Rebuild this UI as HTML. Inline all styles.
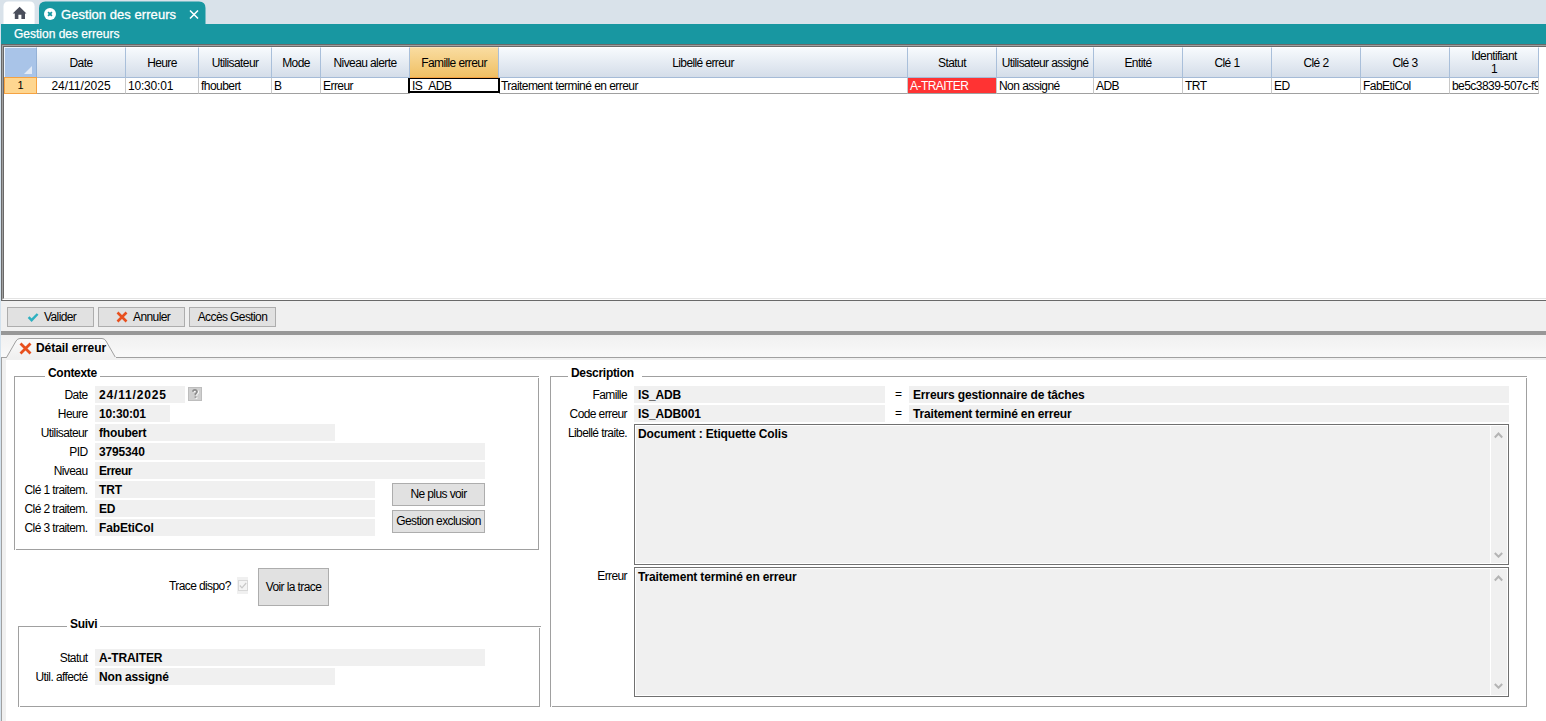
<!DOCTYPE html>
<html><head><meta charset="utf-8">
<style>
*{box-sizing:border-box;margin:0;padding:0}
html,body{width:1546px;height:721px;overflow:hidden}
body{position:relative;background:#fff;font-family:"Liberation Sans",sans-serif;font-size:11px;color:#000}
.a{position:absolute}
.t{position:absolute;white-space:nowrap;line-height:17px;height:16px;letter-spacing:-0.6px;font-size:12px}
.r{text-align:right}
.c{text-align:center}
.b{font-weight:bold}
/* tab strip */
#strip{left:0;top:0;width:1546px;height:24px;background:#d9e2ea}
#home{left:4px;top:2px;width:31px;height:22px;background:#fff;border-radius:5px 5px 0 0}
#ttab{left:39px;top:2px;width:167px;height:22px;background:#1897a1;border-radius:6px 6px 0 0}
#band{left:1px;top:24px;width:1545px;height:20px;background:#1897a1}
#lefte{left:0;top:24px;width:1px;height:697px;background:#d3e2ee}
/* grid */
#grid{left:1px;top:44px;width:1560px;height:257px;background:#fff;border-top:1px solid #696969;border-left:1px solid #696969;border-bottom:1px solid #696969}
#grid2{left:0;top:0;right:0;bottom:0;border-top:1px solid #a0a0a0;border-left:1px solid #a0a0a0;border-bottom:1px solid #fff}
#grid3{left:0;top:0;right:0;bottom:0;border-top:1px solid #696969;border-left:1px solid #696969;border-bottom:1px solid #e3e3e3}
.hc{position:absolute;top:47px;height:31px;background:linear-gradient(#f7fafd,#d4dde9);border-right:1px solid #a9bfda;border-bottom:1px solid #a5bbd7;border-top:1px solid #fff;text-align:center;line-height:30px;white-space:nowrap;overflow:hidden;letter-spacing:-0.6px;font-size:12px}
.dc{position:absolute;top:78px;height:16px;border-right:1px solid #c8c8c8;border-bottom:1px solid #a0a0a0;line-height:16px;padding-left:2px;white-space:nowrap;overflow:hidden;letter-spacing:-0.55px;font-size:12px}
/* buttons */
.btn{position:absolute;height:20px;background:#e1e1e1;border:1px solid #adadad;text-align:center;line-height:19px;white-space:nowrap;letter-spacing:-0.6px;font-size:12px}
.fld{position:absolute;height:17px;background:#f0f0f0;font-weight:bold;font-size:12px;letter-spacing:-0.15px;line-height:19px;padding-left:4px;white-space:nowrap;overflow:hidden}
.lbl{position:absolute;height:17px;line-height:18px;text-align:right;white-space:nowrap;letter-spacing:-0.6px;font-size:12px}
.grp{position:absolute;border:1px solid #a0a0a0}
.gl{position:absolute;background:#fff;font-weight:bold;font-size:12px;letter-spacing:-0.3px;padding:0 3px;line-height:14px;height:14px;white-space:nowrap}
</style></head><body>
<div id="lefte" class="a"></div>
<div id="strip" class="a"></div>
<svg class="a" style="left:0;top:0" width="40" height="24"><path d="M3.5 24 L3.5 6.5 Q3.5 1.5 8.5 1.5 L29.6 1.5 Q34.6 1.5 34.6 6.5 L34.6 24 Z" fill="#fff"/></svg>
<svg class="a" style="left:30px;top:0" width="190" height="24"><path d="M9 24 L9 8 Q9 1.5 15.5 1.5 L169 1.5 Q175.5 1.5 175.5 8 L175.5 24 Z" fill="#1897a1"/></svg>
<div id="band" class="a"></div>
<svg class="a" style="left:12px;top:6px" width="16" height="14" viewBox="0 0 16 14"><path d="M0.7 7.6 L7.6 0.8 L14.5 7.6 L13 7.6 L13 13 L9.4 13 L9.4 8.8 L6.4 8.8 L6.4 13 L2.8 13 L2.8 7.6 Z" fill="#4a4e5b"/></svg>
<svg class="a" style="left:43px;top:7px" width="14" height="14" viewBox="0 0 14 14"><circle cx="7" cy="7" r="6" fill="#fff"/><path d="M5.1 5.1 L8.9 8.9 M8.9 5.1 L5.1 8.9" stroke="#1897a1" stroke-width="1.8"/></svg>
<div class="t" style="left:61px;top:6px;font-size:13px;color:#fff;letter-spacing:0.05px;-webkit-text-stroke:0.3px #fff">Gestion des erreurs</div>
<svg class="a" style="left:189px;top:10px" width="10" height="9" viewBox="0 0 10 9"><path d="M1 0.5 L9 8.5 M9 0.5 L1 8.5" stroke="#fff" stroke-width="1.5"/></svg>
<div class="t" style="left:14px;top:26px;font-size:12px;color:#fff;letter-spacing:0px;-webkit-text-stroke:0.25px #fff">Gestion des erreurs</div>

<div id="grid" class="a"><div id="grid2" class="a"><div id="grid3" class="a"></div></div></div>
<div class="a" style="left:4px;top:47px;width:33px;height:30px;background:#a9c4e8;border-top:1px solid #eaf2fc;border-left:1px solid #eaf2fc;border-right:1px solid #94b1d6"></div>
<svg class="a" style="left:24px;top:66px" width="9" height="9"><polygon points="8,0 8,8 0,8" fill="#e3ebf7"/></svg>
<div class="a c" style="left:4px;top:77px;width:33px;height:17px;background:#fed690;border:1px solid #f5a242;line-height:15px">1</div>
<div class="hc" style="left:37px;width:89px">Date</div>
<div class="dc" style="left:37px;width:89px;text-align:center;padding:0;letter-spacing:0px">24/11/2025</div>
<div class="hc" style="left:126px;width:73px">Heure</div>
<div class="dc" style="left:126px;width:73px;letter-spacing:-0.2px">10:30:01</div>
<div class="hc" style="left:199px;width:73px">Utilisateur</div>
<div class="dc" style="left:199px;width:73px">fhoubert</div>
<div class="hc" style="left:272px;width:49px">Mode</div>
<div class="dc" style="left:272px;width:49px">B</div>
<div class="hc" style="left:321px;width:89px">Niveau alerte</div>
<div class="dc" style="left:321px;width:89px">Erreur</div>
<div class="hc" style="left:410px;width:89px;background:linear-gradient(#f9dca0,#f0c064);border-right-color:#a9bfda;border-bottom-color:#f5a242;border-top-color:#fbe6bb">Famille erreur</div>
<div class="dc" style="left:408px;width:92px;top:78px;height:15px;border:2px solid #000;border-top-width:1px;padding-left:2px;line-height:15px">IS_ADB</div>
<div class="hc" style="left:499px;width:409px">Libellé erreur</div>
<div class="dc" style="left:499px;width:409px">Traitement terminé en erreur</div>
<div class="hc" style="left:908px;width:89px">Statut</div>
<div class="dc" style="left:908px;width:89px;background:#ff3333;color:#fff;padding-left:2px">A-TRAITER</div>
<div class="hc" style="left:997px;width:97px">Utilisateur assigné</div>
<div class="dc" style="left:997px;width:97px">Non assigné</div>
<div class="hc" style="left:1094px;width:89px">Entité</div>
<div class="dc" style="left:1094px;width:89px">ADB</div>
<div class="hc" style="left:1183px;width:89px">Clé 1</div>
<div class="dc" style="left:1183px;width:89px">TRT</div>
<div class="hc" style="left:1272px;width:89px">Clé 2</div>
<div class="dc" style="left:1272px;width:89px">ED</div>
<div class="hc" style="left:1361px;width:89px">Clé 3</div>
<div class="dc" style="left:1361px;width:89px">FabEtiCol</div>
<div class="hc" style="left:1450px;width:89px;line-height:13px;padding-top:2px">Identifiant<br>1</div>
<div class="dc" style="left:1450px;width:89px">be5c3839-507c-f9</div>

<!-- below grid -->
<div class="a" style="left:1px;top:301px;width:1545px;height:30px;background:#f0f0f0"></div>
<div class="btn" style="left:7px;top:307px;width:87px;text-align:left;padding-left:36px">Valider</div>
<svg class="a" style="left:27px;top:312px" width="12" height="10" viewBox="0 0 12 10"><path d="M1.6 5.2 L4.6 8.2 L10.6 2" stroke="#2db0c0" stroke-width="2.4" fill="none"/></svg>
<div class="btn" style="left:98px;top:307px;width:87px;text-align:left;padding-left:34px">Annuler</div>
<svg class="a" style="left:116px;top:311px" width="12" height="12" viewBox="0 0 12 12"><path d="M1.5 1.5 L10.5 10.5 M10.5 1.5 L1.5 10.5" stroke="#e8501e" stroke-width="2.6"/></svg>
<div class="btn" style="left:189px;top:307px;width:87px">Accès Gestion</div>
<div class="a" style="left:1px;top:331px;width:1545px;height:4px;background:#979797"></div>
<div class="a" style="left:1px;top:335px;width:1545px;height:22px;background:linear-gradient(#f0f0f0,#f9f9f9)"></div>
<div class="a" style="left:1px;top:357px;width:1545px;height:364px;background:#f0f0f0;border-top:1px solid #a0a0a0;border-left:1px solid #a0a0a0"></div>
<div class="a" style="left:6px;top:360px;width:1540px;height:361px;background:#fff"></div>
<svg class="a" style="left:0;top:336px" width="130" height="24" viewBox="0 336 130 24"><defs><linearGradient id="tg" x1="0" y1="0" x2="0" y2="1"><stop offset="0" stop-color="#fbfbfb"/><stop offset="1" stop-color="#f0f0f0"/></linearGradient></defs><path d="M6.5 357.5 L16 341 Q17.5 338.5 20 338.5 L102 338.5 Q104.5 338.5 106 341 L115.5 357.5" fill="url(#tg)" stroke="#a0a0a0" stroke-width="1"/><rect x="7" y="357" width="109" height="3" fill="#f0f0f0"/></svg>
<svg class="a" style="left:19px;top:342px" width="13" height="13" viewBox="0 0 13 13"><path d="M1.5 1.5 L11.5 11.5 M11.5 1.5 L1.5 11.5" stroke="#e8501e" stroke-width="2.8"/></svg>
<div class="t b" style="left:36px;top:340px;font-size:12px;letter-spacing:-0.05px">Détail erreur</div>

<!-- Contexte -->
<div class="grp" style="left:14px;top:376px;width:525px;height:174px"></div>
<div class="gl" style="left:45px;top:366px">Contexte</div>
<div class="lbl" style="left:0;width:87.5px;top:386px">Date</div>
<div class="fld" style="left:95px;top:386px;width:90px;letter-spacing:0.85px">24/11/2025</div>
<div class="a" style="left:188px;top:387px;width:14px;height:14px;background:#cfcfcf;border:1px solid #bdbdbd"></div><svg class="a" style="left:191px;top:389px" width="10" height="11" viewBox="0 0 10 11"><path d="M3 3.2 Q3 1.4 5 1.4 Q7 1.4 7 3.2 Q7 4.4 5.5 5.2 L5.5 6.8 M5.5 8.3 L5.5 9.8" stroke="#fff" stroke-width="1.8" fill="none"/><path d="M2 2.7 Q2 0.9 4 0.9 Q6 0.9 6 2.7 Q6 3.9 4.5 4.7 L4.5 6.3 M4.5 7.6 L4.5 8.8" stroke="#8c8c8c" stroke-width="1.8" fill="none"/></svg>
<div class="lbl" style="left:0;width:87.5px;top:405px">Heure</div>
<div class="fld" style="left:95px;top:405px;width:75px">10:30:01</div>
<div class="lbl" style="left:0;width:87.5px;top:424px">Utilisateur</div>
<div class="fld" style="left:95px;top:424px;width:240px">fhoubert</div>
<div class="lbl" style="left:0;width:87.5px;top:443px">PID</div>
<div class="fld" style="left:95px;top:443px;width:390px">3795340</div>
<div class="lbl" style="left:0;width:87.5px;top:462px">Niveau</div>
<div class="fld" style="left:95px;top:462px;width:390px;letter-spacing:-0.5px">Erreur</div>
<div class="lbl" style="left:0;width:87.5px;top:481px">Clé 1 traitem.</div>
<div class="fld" style="left:95px;top:481px;width:280px">TRT</div>
<div class="lbl" style="left:0;width:87.5px;top:500px">Clé 2 traitem.</div>
<div class="fld" style="left:95px;top:500px;width:280px">ED</div>
<div class="lbl" style="left:0;width:87.5px;top:519px">Clé 3 traitem.</div>
<div class="fld" style="left:95px;top:519px;width:280px">FabEtiCol</div>
<div class="btn" style="left:392px;top:483px;width:93px;height:23px;line-height:21px">Ne plus voir</div>
<div class="btn" style="left:392px;top:510px;width:93px;height:23px;line-height:21px">Gestion exclusion</div>

<div class="t" style="left:169px;top:578px">Trace dispo?</div>
<div class="a" style="left:237px;top:577px;width:11px;height:17px;background:#f0f0f0"></div>
<div class="a" style="left:238px;top:580px;width:10px;height:11px;border:1px solid #d8d8d8;background:#f4f4f4"></div>
<svg class="a" style="left:239px;top:582px" width="8" height="7" viewBox="0 0 8 7"><path d="M0.8 3.5 L3 5.8 L7.2 1" stroke="#c8c8c8" stroke-width="1.2" fill="none"/></svg>
<div class="btn" style="left:258px;top:568px;width:71px;height:38px;line-height:36px">Voir la trace</div>

<!-- Suivi -->
<div class="grp" style="left:18px;top:626px;width:522px;height:81px"></div>
<div class="gl" style="left:67px;top:617px">Suivi</div>
<div class="lbl" style="left:0;width:87.5px;top:649px">Statut</div>
<div class="fld" style="left:95px;top:649px;width:390px">A-TRAITER</div>
<div class="lbl" style="left:0;width:87.5px;top:668px">Util. affecté</div>
<div class="fld" style="left:95px;top:668px;width:240px">Non assigné</div>

<!-- Description -->
<div class="grp" style="left:550px;top:376px;width:977px;height:331px"></div>
<div class="gl" style="left:568px;top:366px;padding-right:8px">Description</div>
<div class="lbl" style="left:500px;width:127px;top:386px">Famille</div>
<div class="fld" style="left:634px;top:386px;width:251px">IS_ADB</div>
<div class="t" style="left:895px;top:386px;line-height:17px">=</div>
<div class="fld" style="left:909px;top:386px;width:600px">Erreurs gestionnaire de tâches</div>
<div class="lbl" style="left:500px;width:127px;top:405px">Code erreur</div>
<div class="fld" style="left:634px;top:405px;width:251px">IS_ADB001</div>
<div class="t" style="left:895px;top:405px;line-height:17px">=</div>
<div class="fld" style="left:909px;top:405px;width:600px">Traitement terminé en erreur</div>
<div class="lbl" style="left:500px;width:127px;top:424px">Libellé traite.</div>
<div class="a" style="left:634px;top:424px;width:875px;height:141px;border:1px solid #707070;background:#f0f0f0;box-shadow:inset 0 0 0 1px #fff"></div>
<div class="a" style="left:1490px;top:426px;width:1px;height:137px;background:#fff"></div>
<svg class="a" style="left:1494px;top:432px" width="9" height="7" viewBox="0 0 9 7"><path d="M0.8 5.5 L4.5 1.5 L8.2 5.5" stroke="#b4b4b4" stroke-width="2" fill="none"/></svg>
<svg class="a" style="left:1494px;top:552px" width="9" height="6" viewBox="0 0 9 6"><path d="M0.8 1 L4.5 4.7 L8.2 1" stroke="#b4b4b4" stroke-width="2" fill="none"/></svg>
<div class="t b" style="left:638px;top:426px;font-size:12px;letter-spacing:-0.15px">Document : Etiquette Colis</div>
<div class="lbl" style="left:500px;width:127px;top:567px">Erreur</div>
<div class="a" style="left:634px;top:567px;width:875px;height:130px;border:1px solid #707070;background:#f0f0f0;box-shadow:inset 0 0 0 1px #fff"></div>
<div class="a" style="left:1490px;top:569px;width:1px;height:126px;background:#fff"></div>
<svg class="a" style="left:1494px;top:575px" width="9" height="7" viewBox="0 0 9 7"><path d="M0.8 5.5 L4.5 1.5 L8.2 5.5" stroke="#b4b4b4" stroke-width="2" fill="none"/></svg>
<svg class="a" style="left:1494px;top:683px" width="9" height="6" viewBox="0 0 9 6"><path d="M0.8 1 L4.5 4.7 L8.2 1" stroke="#b4b4b4" stroke-width="2" fill="none"/></svg>
<div class="t b" style="left:638px;top:569px;font-size:12px;letter-spacing:-0.15px">Traitement terminé en erreur</div>
<div class="a" style="left:538px;top:377px;width:1px;height:1px;background:#fff"></div>
<div class="a" style="left:15px;top:549px;width:1px;height:1px;background:#fff"></div>
<div class="a" style="left:539px;top:627px;width:1px;height:1px;background:#fff"></div>
<div class="a" style="left:540px;top:626px;width:1px;height:1px;background:#a0a0a0"></div>
<div class="a" style="left:19px;top:706px;width:1px;height:1px;background:#fff"></div>
<div class="a" style="left:1526px;top:377px;width:1px;height:1px;background:#fff"></div>
<div class="a" style="left:551px;top:706px;width:1px;height:1px;background:#fff"></div>
</body></html>
